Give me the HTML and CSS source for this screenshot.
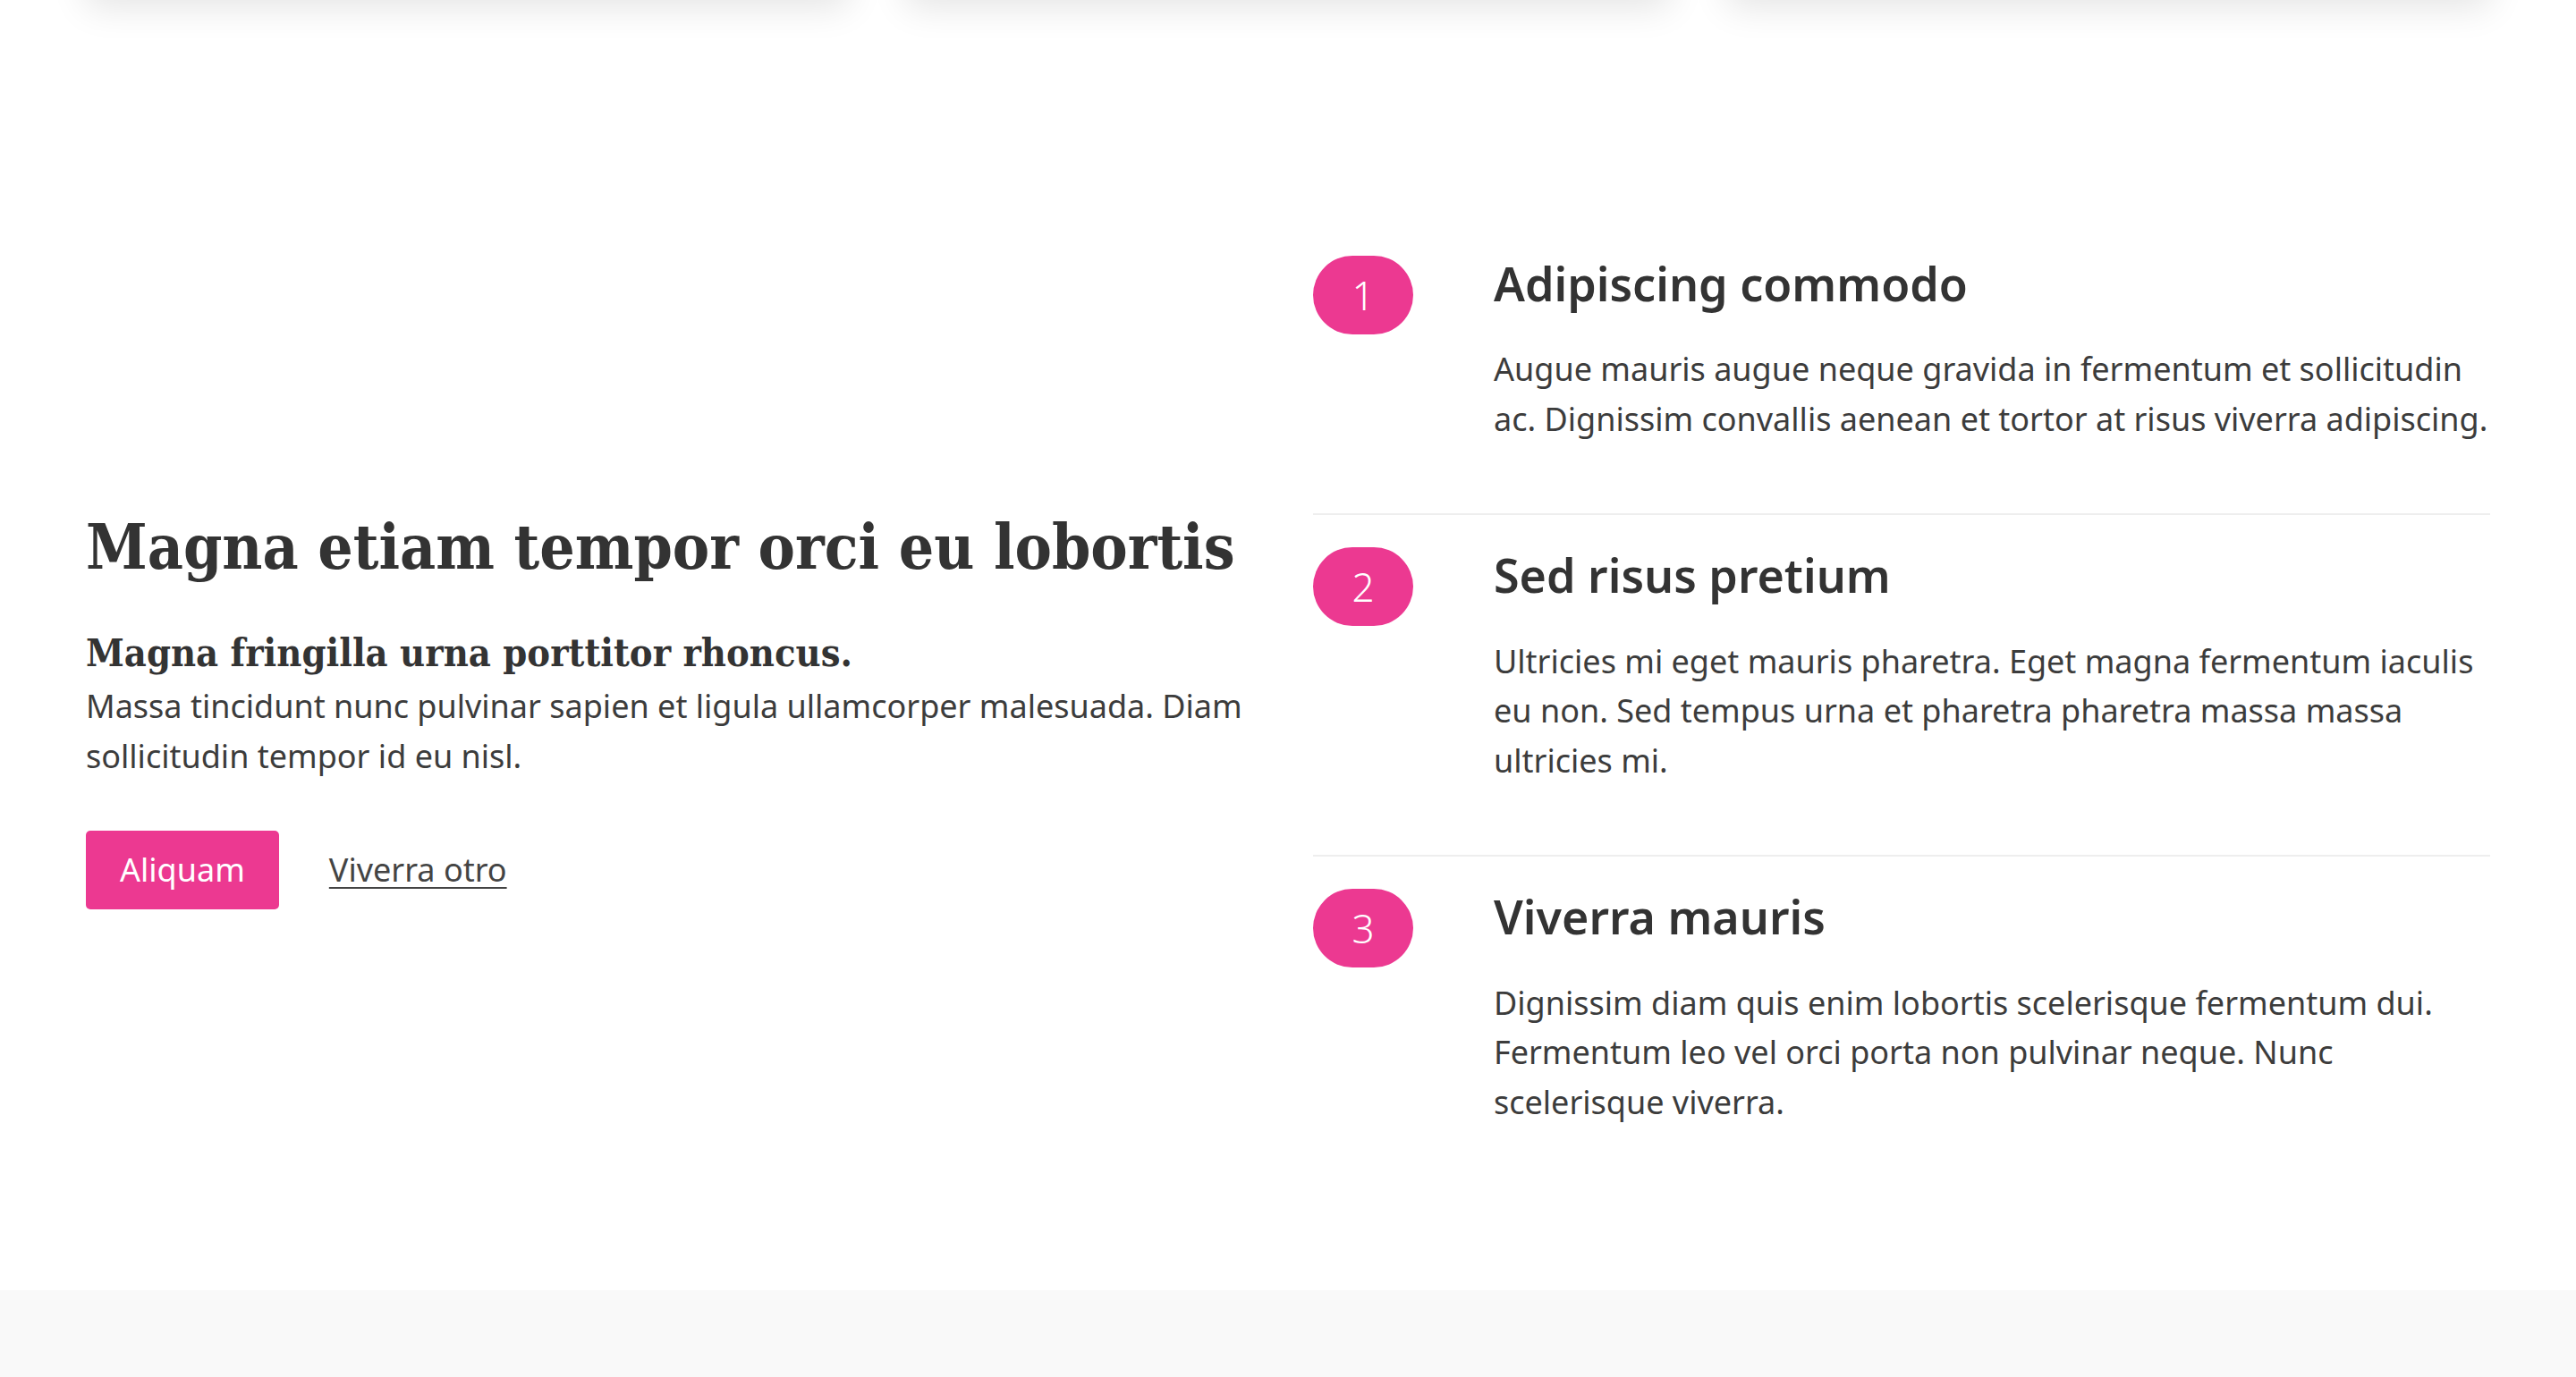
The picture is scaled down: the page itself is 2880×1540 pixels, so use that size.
FILE: index.html
```html
<!DOCTYPE html>
<html lang="la">
<head>
<meta charset="utf-8">
<title>Magna etiam</title>
<link rel="stylesheet" href="styles.css">
</head>
<body>
  <div class="container cards">
    <div class="card"></div>
    <div class="card"></div>
    <div class="card"></div>
  </div>

  <section class="feature">
    <div class="container feature-grid">
      <div class="intro">
        <h2 class="intro-title">Magna etiam tempor orci eu lobortis</h2>
        <h3 class="intro-sub">Magna fringilla urna porttitor rhoncus.</h3>
        <p class="text intro-text">Massa tincidunt nunc pulvinar sapien et ligula ullamcorper malesuada. Diam sollicitudin tempor id eu nisl.</p>
        <div class="actions">
          <a class="btn" href="#">Aliquam</a>
          <a class="link" href="#">Viverra otro</a>
        </div>
      </div>
      <div class="steps">
        <div class="step">
          <div class="num">1</div>
          <div class="step-body">
            <h4 class="step-title">Adipiscing commodo</h4>
            <p class="text">Augue mauris augue neque gravida in fermentum et sollicitudin ac. Dignissim convallis aenean et tortor at risus viverra adipiscing.</p>
          </div>
        </div>
        <div class="step">
          <div class="num">2</div>
          <div class="step-body">
            <h4 class="step-title">Sed risus pretium</h4>
            <p class="text">Ultricies mi eget mauris pharetra. Eget magna fermentum iaculis eu non. Sed tempus urna et pharetra pharetra massa massa ultricies mi.</p>
          </div>
        </div>
        <div class="step">
          <div class="num">3</div>
          <div class="step-body">
            <h4 class="step-title">Viverra mauris</h4>
            <p class="text">Dignissim diam quis enim lobortis scelerisque fermentum dui. Fermentum leo vel orci porta non pulvinar neque. Nunc scelerisque viverra.</p>
          </div>
        </div>
      </div>
    </div>
  </section>

  <footer class="footer"></footer>
</body>
</html>
```

FILE: styles.css
```css
html, body {
  margin: 0;
  padding: 0;
  background: #ffffff;
}

body {
  font-family: "Noto Sans", "Open Sans", sans-serif;
  color: #3c3c3c;
  overflow: hidden;
}

.container {
  width: 2688px;
  margin: 0 auto;
}

.cards {
  display: grid;
  grid-template-columns: repeat(3, 1fr);
  gap: 64px;
  margin-top: -300px;
}

.card {
  height: 300px;
  background: #ffffff;
  border-radius: 8px;
  box-shadow: 0 8px 40px rgba(0, 0, 0, 0.11);
}

.feature {
  padding: 250px 0 105px;
}

.feature-grid {
  display: grid;
  grid-template-columns: 1300px 1fr;
  column-gap: 72px;
  align-items: center;
}

.intro-title {
  font-family: "DejaVu Serif Condensed", "DejaVu Serif", serif;
  font-weight: 700;
  font-size: 69px;
  line-height: 1.2;
  margin: 0 0 51px;
  color: #333333;
  white-space: nowrap;
}

.intro-sub {
  font-family: "DejaVu Serif Condensed", "DejaVu Serif", serif;
  font-weight: 700;
  font-size: 43px;
  line-height: 1.2;
  margin: 0 0 6px;
  color: #333333;
}

.text {
  font-size: 36px;
  line-height: 55.5px;
  margin: 0;
  color: #3c3c3c;
}

.actions {
  display: flex;
  align-items: center;
  gap: 56px;
  margin-top: 56px;
}

.btn {
  display: inline-block;
  background: #ec3991;
  color: #ffffff;
  font-size: 36px;
  line-height: 54px;
  padding: 17px 38px;
  border-radius: 5px;
  text-decoration: none;
}

.link {
  font-size: 36px;
  line-height: 54px;
  color: #444444;
  text-decoration: underline;
  text-underline-offset: 6px;
  text-decoration-thickness: 2px;
}

.step {
  display: flex;
  align-items: flex-start;
  gap: 90px;
  padding: 36px 0 78px;
  border-bottom: 2px solid #eeeeee;
}

.step:last-child {
  border-bottom: 0;
}

.num {
  flex: 0 0 112px;
  height: 88px;
  border-radius: 44px;
  background: #ec3991;
  color: #ffffff;
  display: flex;
  align-items: center;
  justify-content: center;
  font-size: 44px;
  font-weight: 300;
}

.step-body {
  flex: 1 1 auto;
}

.step-title {
  font-size: 52px;
  font-weight: 600;
  line-height: 1.2;
  margin: 0 0 37px;
  color: #333333;
}

.footer {
  background: #f9f9f9;
  height: 400px;
}
```
